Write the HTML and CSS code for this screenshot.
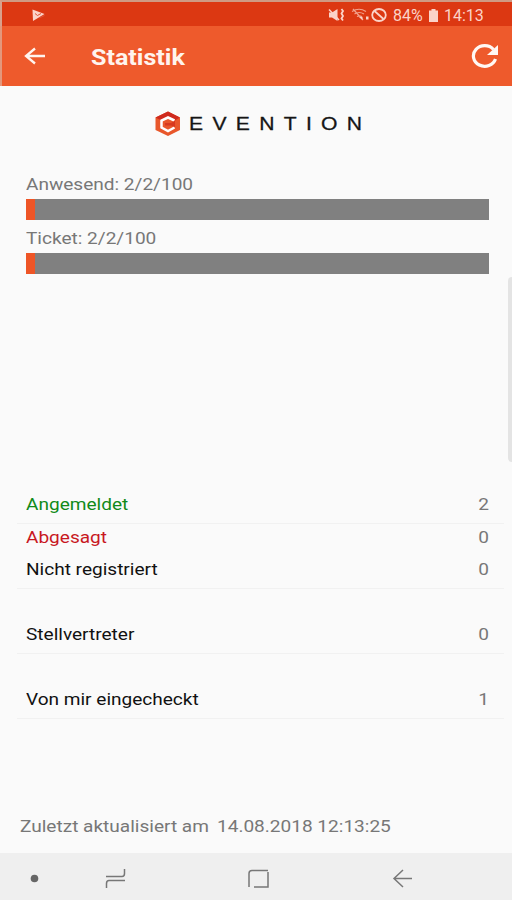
FILE: index.html
```
<!DOCTYPE html>
<html lang="de">
<head>
    <meta charset="UTF-8">
    <meta name="viewport" content="width=device-width, initial-scale=1.0">
    <title>Statistik</title>
    <link rel="stylesheet" href="styles.css">
</head>
<body>
    <!-- Status bar -->
    <div class="status-bar">
        <svg class="play" width="13" height="13" viewBox="0 0 13 13">
            <path d="M.5 .5L12.500 5L1 12z" fill="#fbd3c8"/>
            <path d="M3 4.500l2.500 2L9 4.500M7 9l5.500-2.500" stroke="#e0563a" fill="none"/>
        </svg>
        <div class="status-icons">
            <svg width="18" height="14" viewBox="0 0 18 14">
                <path d="M1 4.500h3L9.500 1v12L4 9.500H1z" fill="#fbd3c8"/>
                <path d="M1 1.500l10 10.500" stroke="#fbd3c8" stroke-width="1.500"/>
                <path d="M13.500 1l1.500 2-1.500 2.500 1.500 2.500-1.500 2.500 1.500 2" stroke="#fbd3c8" stroke-width="1.800" fill="none"/>
            </svg>
            <svg class="wifi" width="20" height="14" viewBox="0 0 20 14">
                <path d="M1 3.500Q8-1 15 3.500M3.500 6Q8 3 13 6M6 8.500Q9 7 11 9M2 1l10 11" stroke="#f2a48f" stroke-width="1.200" fill="none"/>
                <path d="M8 9h3.500v3zM15 8.500h2.500v3h-2.500z" fill="#fbd3c8"/>
            </svg>
            <svg class="block" width="16" height="14" viewBox="0 0 16 14">
                <ellipse cx="8" cy="7" rx="6.800" ry="6" stroke="#fbd3c8" stroke-width="1.800" fill="none"/>
                <path d="M3.500 3l9 8" stroke="#fbd3c8" stroke-width="1.800"/>
            </svg>
            <span class="battery-text">84%</span>
            <svg class="battery" width="11" height="13" viewBox="0 0 11 13">
                <path d="M3.500 0h4v1.500H10V13H1V1.500h2.500z" fill="#fbd3c8"/>
            </svg>
            <span class="clock">14:13</span>
        </div>
    </div>

    <!-- App bar -->
    <header class="app-bar">
        <svg class="back" width="22" height="18" viewBox="0 0 22 18">
            <path d="M21 9H2.500M11 1.500L2 9l9 7.500" stroke="#fff4ee" stroke-width="2.300" fill="none"/>
        </svg>
        <h1>Statistik</h1>
        <svg class="refresh" width="30" height="26" viewBox="0 0 30 26">
            <path d="M23.500 6.500A11.300 10.300 0 1 0 25.500 16" stroke="#fff8f4" stroke-width="3.200" fill="none"/>
            <path d="M28 2V12H17z" fill="#fff8f4"/>
        </svg>
    </header>

    <main>
        <!-- Logo -->
        <div class="logo">
            <svg width="26" height="26" viewBox="0 0 26 26">
                <path d="M13 .5L25 6.500V19L13 25 .5 19V6.500z" fill="#e8572b"/>
                <path d="M.5 6.500L13 .5l12 6-5 3L13 6 5.500 9z" fill="#cf2a1e"/>
                <path d="M19.500 9.500L13 6.500 6.500 9.500v7L13 20l6.500-3.500" stroke="#fff" stroke-width="2.500" fill="none"/>
                <path d="M10 12h6l4-2.500V16L16 14.500h-6z" fill="#d8391f"/>
            </svg>
            <span class="logo-text">EVENTION</span>
        </div>

        <!-- Progress -->
        <section class="progress">
            <p class="anwesend"><span>Anwesend: 2/2/100</span></p>
            <div class="bar"><div class="bar-fill" style="width: 2%"></div></div>
            <p class="ticket"><span>Ticket: 2/2/100</span></p>
            <div class="bar"><div class="bar-fill" style="width: 2%"></div></div>
        </section>

        <!-- Counters -->
        <ul class="counts">
            <li class="line"><span class="green">Angemeldet</span><b>2</b></li>
            <li><span class="red">Abgesagt</span><b>0</b></li>
            <li class="line"><span>Nicht registriert</span><b>0</b></li>
            <li class="line spaced"><span>Stellvertreter</span><b>0</b></li>
            <li class="line spaced"><span>Von mir eingecheckt</span><b>1</b></li>
        </ul>

        <p class="updated"><span>Zuletzt aktualisiert am</span> <span class="date">14.08.2018 12:13:25</span></p>
        <div class="scroll-thumb"></div>
    </main>

    <!-- Navigation bar -->
    <nav class="nav-bar">
        <svg width="512" height="47" viewBox="0 0 512 47" fill="none" stroke="#777" stroke-width="1.500">
            <circle cx="34.500" cy="25.500" r="3.800" fill="#666" stroke="none"/>
            <path d="M106 23.500h16q2.500 0 2.500-3v-4.500M125 27.500h-16q-2.500 0-2.500 3v4.500"/>
            <path d="M268 17.500h-16q-3 0-3 3V34M254 34h14V19"/>
            <path d="M412 25.500h-18M403 17l-9 8.500 9 8.500"/>
        </svg>
    </nav>
</body>
</html>
```
FILE: styles.css
```
* {
    box-sizing: border-box;
    margin: 0;
    padding: 0;
}

body {
    width: 512px;
    height: 900px;
    display: flex;
    flex-direction: column;
    font-family: Roboto, sans-serif;
    background: #fafafa;
    overflow: hidden;
}

svg {
    display: block;
    flex: none;
}

.status-bar {
    height: 26px;
    display: flex;
    align-items: center;
    justify-content: space-between;
    padding: 2px 27px 0 30px;
    background: #dc3812;
    border-top: 2px solid #cf9a83;
    border-left: 2px solid #d9a08c;
    color: #fbd3c8;
}

.status-icons {
    display: flex;
    align-items: center;
    font-size: 16px;
}

.wifi {
    margin-left: 5px;
}

.battery-text {
    width: 32px;
    margin-left: 6px;
}

.battery {
    margin-left: 3px;
}

.clock {
    width: 41px;
    margin-left: 5px;
}

.app-bar {
    height: 60px;
    display: flex;
    align-items: center;
    padding: 0 12px 0 22px;
    background: #ee5a2c;
    border-left: 2px solid #e3977c;
}

h1 {
    margin-left: 45px;
    font-size: 22px;
    font-weight: 700;
    color: #fff4ee;
    transform: scaleX(1.14);
    transform-origin: left;
    padding-top: 3px;
}

.refresh {
    margin-left: auto;
}

main {
    position: relative;
    flex: 1;
    display: flex;
    flex-direction: column;
}

.logo {
    display: flex;
    align-items: center;
    height: 26px;
    margin: 25px 0 0 155px;
}

.logo-text {
    margin-left: 8px;
    font-family: "Liberation Sans", sans-serif;
    font-size: 19px;
    letter-spacing: 8.400px;
    color: #151515;
    -webkit-text-stroke: 0.3px #151515;
    transform: scaleX(1.11);
    transform-origin: left;
}

.progress {
    margin: 35px 23px 0 26px;
    color: #777;
    font-size: 16px;
}

.progress p {
    height: 27px;
    line-height: 25px;
}

.progress .ticket {
    height: 33px;
    line-height: 37px;
}

.progress span,
.updated span,
.counts span,
.counts b {
    display: inline-block;
    transform: scaleX(1.19);
    transform-origin: left;
    white-space: nowrap;
}

.bar {
    height: 21px;
    background: #808080;
}

.bar-fill {
    height: 100%;
    background: #ee5526;
}

.counts {
    list-style: none;
    margin: 217px 8px 0 17px;
    font-size: 16px;
    color: #111;
}

.counts li {
    height: 32.500px;
    display: flex;
    align-items: center;
    justify-content: space-between;
    padding: 0 15px 4px 9px;
    border-bottom: 1px solid transparent;
}

.counts .line {
    border-bottom-color: #f1f1f1;
}

.counts .spaced {
    margin-top: 32.500px;
}

.counts b {
    font-weight: 400;
    color: #777;
    transform-origin: right;
}

.counts .green {
    color: #108a18;
}

.counts .red {
    color: #c8181f;
}

.updated {
    display: flex;
    margin: auto 0 17px 20px;
    font-size: 16px;
    color: #777;
}

.updated .date {
    margin-left: 38px;
}

.scroll-thumb {
    position: absolute;
    top: 191px;
    right: 0;
    width: 4px;
    height: 185px;
    background: #e4e4e4;
    border-radius: 4px 0 0 4px;
}

.nav-bar {
    height: 47px;
    background: #efefef;
}
```
